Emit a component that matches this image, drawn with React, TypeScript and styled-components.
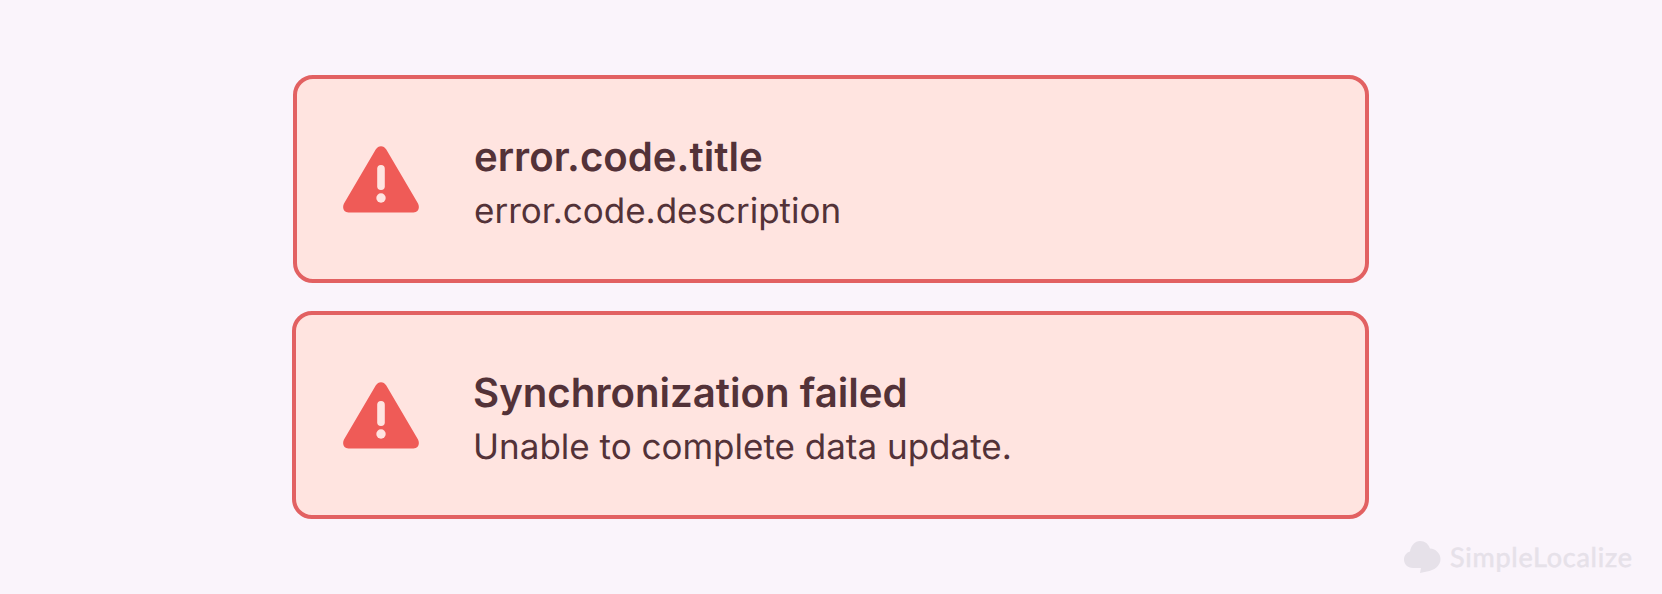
import React from "react";
import styled, { createGlobalStyle } from "styled-components";

const GlobalStyle = createGlobalStyle`
  html, body {
    margin: 0;
    padding: 0;
    background: #faf4fb;
    font-family: Inter, "Noto Sans", sans-serif;
    text-rendering: geometricPrecision;
  }
`;

const Page = styled.div`
  position: relative;
  width: 1662px;
  height: 594px;
  box-sizing: border-box;
  padding: 75px 0 0 293px;
  overflow: hidden;
`;

const List = styled.div`
  display: flex;
  flex-direction: column;
  gap: 28px;
  width: 1076px;
`;

const Card = styled.div<{ $nudge: number }>`
  box-sizing: border-box;
  height: 208px;
  display: flex;
  align-items: center;
  margin-left: ${({ $nudge }) => $nudge}px;
  padding-left: 46px;
  background: #ffe4e0;
  border: 4px solid #e26162;
  border-radius: 20px;
`;

const IconBox = styled.svg<{ $nudge: number }>`
  width: 76px;
  height: 67px;
  flex: none;
  margin-left: ${({ $nudge }) => -$nudge}px;
  margin-right: ${({ $nudge }) => 55 + $nudge}px;
  color: #ef5b57;
`;

const TextBlock = styled.div`
  display: flex;
  flex-direction: column;
  gap: 6px;
  padding-top: 10px;
  color: #533238;
`;

const Title = styled.div`
  font-size: 40.2px;
  line-height: 48px;
  font-weight: 600;
`;

const Description = styled.div`
  font-size: 35px;
  line-height: 48px;
  font-weight: 400;
`;

const Watermark = styled.div`
  position: absolute;
  left: 1404px;
  top: 540px;
  display: flex;
  align-items: center;
  gap: 9px;
  color: #e6e1e9;
  font-family: Lato, sans-serif;
  font-size: 27px;
  font-weight: 400;
  letter-spacing: 0.75px;
  -webkit-text-stroke: 0.5px #e6e1e9;
`;

const Cloud = styled.svg`
  width: 37px;
  height: 32px;
`;

const Warning = ({ nudge }: { nudge: number }) => (
  <IconBox viewBox="0 0 76 67" $nudge={nudge}>
    <path
      fill="currentColor"
      d="M32.7 3.5 L1 57.5 C-1.2 62 1 66.5 5.5 66.5 L70.5 66.5 C75 66.5 77.2 62 75 57.5 L43.3 3.5 C40.8 -1 35.2 -1 32.7 3.5 Z"
    />
    <rect x="34.2" y="19" width="7.6" height="25" rx="3.8" fill="#ffe4e0" />
    <circle cx="38" cy="52" r="4.7" fill="#ffe4e0" />
  </IconBox>
);

const errors = [
  { title: "error.code.title", description: "error.code.description", nudge: 0 },
  { title: "Synchronization failed", description: "Unable to complete data update.", nudge: -1 },
];

const App: React.FC = () => {
  return (
    <Page>
      <GlobalStyle />
      <List>
        {errors.map((e) => (
          <Card key={e.title} $nudge={e.nudge}>
            <Warning nudge={e.nudge} />
            <TextBlock>
              <Title>{e.title}</Title>
              <Description>{e.description}</Description>
            </TextBlock>
          </Card>
        ))}
      </List>
      <Watermark>
        <Cloud viewBox="0 0 37 32">
          <path
            fill="currentColor"
            d="M9 27 C3.5 27 0 23 0 18.5 C0 14.5 2.5 11.5 6 10.5 C7 4.5 11 0 16 0 C21 0 24.5 3 26 7.5 C32 8 36.5 12.5 36.5 18 C36.5 25 30 29.5 23 30.5 L16 32 L17 27 Z"
          />
        </Cloud>
        SimpleLocalize
      </Watermark>
    </Page>
  );
};

export default App;
